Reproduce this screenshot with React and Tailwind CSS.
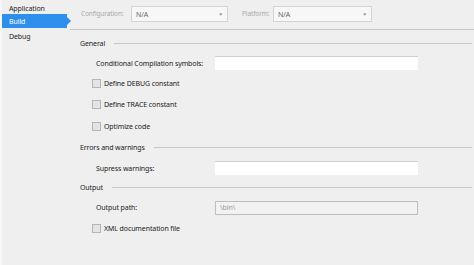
const font = { fontFamily: '"Noto Sans", "Open Sans", sans-serif' }

function Combo({ value }) {
  return (
    <div className="flex h-[16px] items-center justify-between border border-[#d4d4d4] bg-[#f7f7f7] pl-[4px] pr-[4px] text-[#666]">
      <span>{value}</span>
      <span className="text-[5px] text-[#999]">▼</span>
    </div>
  )
}

function Header({ label }) {
  return (
    <div className="flex items-center gap-[9px] pl-[10px]">
      <span className="text-[#222]">{label}</span>
      <div className="h-px flex-1 bg-[#c6c6c6]" />
    </div>
  )
}

function Checkbox({ label }) {
  return (
    <div className="flex items-center gap-[3px] pl-[22px]">
      <div className="h-[9px] w-[9px] border border-[#b4b4b4] bg-[#e4e4e4]" />
      <span className="text-[#222]">{label}</span>
    </div>
  )
}

function FieldRow({ label, disabled, value }) {
  return (
    <div className="flex items-center">
      <span className="w-[145px] whitespace-nowrap pl-[26px] text-[#222]">{label}</span>
      <div
        className={
          disabled
            ? 'flex h-[14px] w-[203px] items-center border border-[#bdbdbd] bg-[#f2f2f2] pl-[4px] text-[#9a9a9a]'
            : 'h-[14px] w-[203px] border-t border-[#cfcfcf] bg-white'
        }
      >
        {value}
      </div>
    </div>
  )
}

export default function App() {
  return (
    <div
      className="flex h-[265px] w-[474px] bg-[#efefef] text-[7px] leading-none tracking-[-0.1px]"
      style={font}
    >
      <aside className="w-[70px] shrink-0 border-l-2 border-[#f7f7f7] pt-[2px]">
        <div className="flex h-[12px] items-center pl-[7px] text-[#222]">Application</div>
        <div className="relative mr-[3px] flex h-[14px] items-center bg-[#2f8fec] pl-[7px] text-white">
          Build
          <span className="absolute right-[-4px] top-[3px] h-0 w-0 border-y-[4px] border-l-[4px] border-y-transparent border-l-[#2f8fec]" />
        </div>
        <div className="flex h-[16px] items-center pl-[7px] text-[#222]">Debug</div>
      </aside>

      <main className="flex flex-1 flex-col">
        <div className="flex h-[30px] items-center border-b border-[#c4c4c4] pb-[4px] pl-[11px] pt-[3px]">
          <span className="w-[50px] whitespace-nowrap text-[6.5px] text-[#a8a8a8]">Configuration:</span>
          <div className="w-[97px]">
            <Combo value="N/A" />
          </div>
          <span className="ml-[14px] w-[31px] whitespace-nowrap text-[6.5px] text-[#a8a8a8]">Platform:</span>
          <div className="w-[99px]">
            <Combo value="N/A" />
          </div>
        </div>

        <div className="mt-[3px] flex flex-col pr-[2px]">
          <div className="flex h-[20px] flex-col justify-center">
            <Header label="General" />
          </div>
          <div className="flex h-[20px] flex-col justify-center">
            <FieldRow label="Conditional Compilation symbols:" />
          </div>
          <div className="flex h-[20px] flex-col justify-center">
            <Checkbox label="Define DEBUG constant" />
          </div>
          <div className="flex h-[22px] flex-col justify-center">
            <Checkbox label="Define TRACE constant" />
          </div>
          <div className="flex h-[22px] flex-col justify-center">
            <Checkbox label="Optimize code" />
          </div>
          <div className="flex h-[21px] flex-col justify-center">
            <Header label="Errors and warnings" />
          </div>
          <div className="flex h-[20px] flex-col justify-center">
            <FieldRow label="Supress warnings:" />
          </div>
          <div className="flex h-[19px] flex-col justify-center">
            <Header label="Output" />
          </div>
          <div className="flex h-[21px] flex-col justify-center">
            <FieldRow label="Output path:" disabled value="\bin\" />
          </div>
          <div className="flex h-[20px] flex-col justify-center">
            <Checkbox label="XML documentation file" />
          </div>
        </div>
      </main>
    </div>
  )
}
